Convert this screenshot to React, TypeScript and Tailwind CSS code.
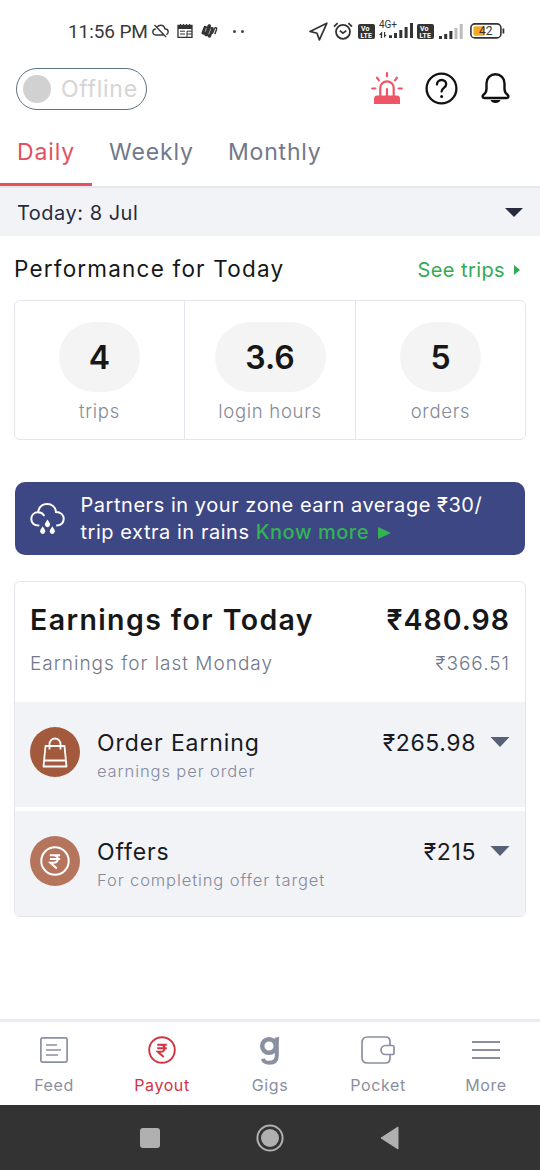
import type { ReactNode } from "react";

type Stat = { value: string; label: string; pill: string };

const stats: Stat[] = [
  { value: "4", label: "trips", pill: "w-[81px]" },
  { value: "3.6", label: "login hours", pill: "w-[111px]" },
  { value: "5", label: "orders", pill: "w-[81px]" },
];

function VolteBadge() {
  return (
    <svg width="17" height="15" viewBox="0 0 17 15">
      <rect width="17" height="15" rx="2" fill="#333" />
      <text x="3" y="6.8" fontSize="7" fontWeight="700" fill="#fff" fontFamily="Roboto, sans-serif">Vo</text>
      <text x="2.6" y="13.5" fontSize="7" fontWeight="700" fill="#fff" fontFamily="Roboto, sans-serif">LTE</text>
    </svg>
  );
}

function StatusBar() {
  return (
    <div className="flex h-[62px] shrink-0 items-center pl-[68px] text-[#3a3a3a]">
      <span className="w-[84px] whitespace-nowrap font-[Roboto,sans-serif] text-[19px] leading-none tracking-[-0.1px]">
        11:56 PM
      </span>
      <svg width="17" height="14" viewBox="0 0 17 14" fill="none" stroke="currentColor" strokeWidth="1.4">
        <path d="M5 3.2C6 1.8 7.3 1.2 8.7 1.2c2.2 0 3.8 1.4 4.2 3.6 2 .2 3.3 1.3 3.3 3 0 1.5-.8 2.5-2 2.9M11.5 11H4.3C2.2 11 .8 9.8.8 8c0-1.8 1.3-2.9 3-3M2.5 1l11.5 12" />
      </svg>
      <svg className="ml-[8px]" width="16" height="14" viewBox="0 0 16 14">
        <path d="M1 1.5h14v11.8H1z" fill="none" stroke="#333" strokeWidth="1.3" />
        <path d="M1 1h14v4H1zM3 0h1v1H3zM6 0h1v1H6zM9 0h1v1H9zM12 0h1v1h-1z" fill="#333" />
        <path d="M3 7.2h5M3 10h5M10 13V7.2h5M10 10h5" stroke="#333" strokeWidth="1" fill="none" />
      </svg>
      <svg className="ml-[8px]" width="17" height="14" viewBox="0 0 17 14" fill="none" stroke="#333" strokeLinecap="round">
        <path d="M2.3 8.8l2-5.2M5.2 10.5l3-8.5M8.4 11.8l2.5-7" strokeWidth="3.6" />
        <path d="M11.6 9.3l1.8-4.6c1-2 2.7-1.2 2.2.5L14 9.7" strokeWidth="1.4" />
        <path d="M5.2 4.3l-.8 3M9.8 5l-2 5" stroke="#fff" strokeWidth=".6" />
      </svg>
      <span className="ml-[15px] flex gap-[5px]">
        <i className="size-[3px] rounded-full bg-[#444]" />
        <i className="size-[3px] rounded-full bg-[#444]" />
      </span>
      <svg className="ml-[65px]" width="19" height="19" viewBox="0 0 19 19" fill="none" stroke="#333" strokeWidth="1.7" strokeLinejoin="round">
        <path d="M17.8 1.3L1 9.4l7 1.9 2.4 6.6z" />
      </svg>
      <svg className="ml-[5px]" width="20" height="18" viewBox="0 0 20 18" fill="none" stroke="#333" strokeWidth="1.8">
        <circle cx="10" cy="9.8" r="7" />
        <path d="M1 4.6l3.6-3.4M19 4.6l-3.6-3.4M6.8 8.6l3.2 2.6 3.3-2.6" />
      </svg>
      <span className="ml-[5px]"><VolteBadge /></span>
      <svg className="ml-[4px] mt-[-2px]" width="35" height="20" viewBox="0 0 35 20" fill="#333">
        <text x="0" y="8" fontSize="10" fontFamily="Roboto, sans-serif" textLength="18">4G+</text>
        <path d="M2.5 12L0 15h1.8v3h1.4v-6zM5 12v6l2.6-3H6.2v-3z" />
        <path d="M10 15.3h3V18h-3zM15 13h3v5h-3zM20.3 10h3v8h-3zM25.6 7h3v11h-3zM31 3h3v15h-3z" />
      </svg>
      <span className="ml-[3px]"><VolteBadge /></span>
      <svg className="ml-[5px]" width="24" height="15" viewBox="0 0 24 15" fill="#333">
        <path d="M0 12h3v3H0zM5.2 10h3v5h-3zM10.4 7h3v8h-3z" />
        <path d="M15.5 4h3v11h-3zM20.7 0h3v15h-3z" fill="#bbb" />
      </svg>
      <svg className="ml-[7px]" width="35" height="16" viewBox="0 0 35 16">
        <rect x=".9" y=".9" width="30" height="14" rx="4" fill="none" stroke="#333" strokeWidth="1.6" />
        <rect x="3.5" y="3.3" width="11" height="9.4" rx="1.5" fill="#f5a623" />
        <rect x="32.5" y="5.5" width="1.8" height="5" fill="#333" />
        <text x="9" y="12.2" fontSize="12" fill="#333" fontFamily="Roboto, sans-serif">42</text>
      </svg>
    </div>
  );
}

function Header() {
  return (
    <header className="flex h-[58px] shrink-0 items-start pl-4 pt-[6px]">
      <div className="flex h-[42px] w-[131px] items-center rounded-full border border-[#5d7384] pl-[6px]">
        <span className="size-7 rounded-full bg-[#d1d1d1]" />
        <span className="ml-[10px] text-[23px] leading-none tracking-[0.7px] text-[#d5d5d5]">Offline</span>
      </div>
      <svg className="ml-[224px] mt-1" width="32" height="33" viewBox="0 0 32 33" fill="none" stroke="#ee5565" strokeWidth="2.2" strokeLinecap="round">
        <path d="M16 1.2v3M6 5.6l2 2.7M26 5.6l-2 2.7M1.2 16.5h3.2M27.6 16.5h3.2" />
        <path d="M9.3 24v-8a6.7 6.7 0 0 1 13.4 0v8M16 24v-7" />
        <path d="M3 32v-5c0-2 1-3.500 3-3.500h20c2 0 3 1.500 3 3.500v5z" fill="#ee5565" stroke="none" />
      </svg>
      <svg className="ml-[22px] mt-1" width="33" height="33" viewBox="0 0 33 33" fill="none" stroke="#111" strokeWidth="2.3" strokeLinecap="round">
        <circle cx="16.5" cy="16.5" r="14.9" />
        <path d="M12 12.5c0-2.600 1.900-4.500 4.600-4.500 2.700 0 4.600 1.800 4.600 4.200 0 3.700-4.600 3.700-4.600 7.300" />
        <circle cx="16.6" cy="24.5" r="1.5" fill="#111" stroke="none" />
      </svg>
      <svg className="ml-[23px] mt-[5px]" width="29" height="31" viewBox="0 0 29 31" fill="none" stroke="#111" strokeWidth="2.4" strokeLinejoin="round">
        <path d="M14.5 1.300c-5.200 0-9 3.900-9 9v5.500c0 3.200-1.300 4.700-3 6-1.500 1.200-1 3.200 1 3.200h22c2 0 2.500-2 1-3.200-1.700-1.300-3-2.800-3-6v-5.500c0-5.100-3.800-9-9-9z" />
        <path d="M9.5 27h10c-.6 2-2.600 3-5 3s-4.400-1-5-3z" fill="#111" stroke="none" />
      </svg>
    </header>
  );
}

function Tabs() {
  return (
    <nav className="flex h-[68px] shrink-0 border-b-2 border-[#e5e7ec] text-[23px] leading-none text-[#72788c]">
      <div className="relative w-[92px] pl-[17px] pt-[21px] tracking-[0.9px] text-[#e4505f]">
        Daily
        <span className="absolute left-0 top-[63px] h-[3px] w-[92px] bg-[#e4505f]" />
      </div>
      <span className="ml-[17px] w-[119px] pt-[21px] tracking-[0.9px]">Weekly</span>
      <span className="pt-[21px] tracking-[0.8px]">Monthly</span>
    </nav>
  );
}

function Rupee({ className }: { className: string }) {
  return (
    <svg className={className} viewBox="0 0 28 28" fill="none" stroke="currentColor">
      <circle cx="14" cy="14" r="12.8" strokeWidth="1.9" />
      <path d="M9.2 8.7h9.6M9.2 12.2h9.6M9.2 8.7h3.2c5.6 0 5.6 7 0 7H9.7l6 5.3" strokeWidth="1.9" />
    </svg>
  );
}

function EarningRow({ icon, title, note, amount }: { icon: ReactNode; title: string; note: string; amount: string }) {
  return (
    <div className="flex h-[105px] items-start bg-[#f2f3f7] px-[15px]">
      {icon}
      <div className="ml-[17px] flex-1 pt-[28px]">
        <div className="text-[23px] leading-[26px] tracking-[0.9px] text-[#171a22]">{title}</div>
        <div className="mt-[4px] text-[16.5px] font-light leading-[22px] tracking-[0.9px] text-[#858a9d]">{note}</div>
      </div>
      <div className="mt-[28px] text-[23px] leading-[26px] tracking-[0.6px] text-[#171a22]">{amount}</div>
      <svg className="ml-[14px] mt-[35px]" width="20" height="10" viewBox="0 0 20 10">
        <path d="M.5 0h19L10 10z" fill="#566176" />
      </svg>
    </div>
  );
}

function NavItem({ label, active, children }: { label: string; active?: boolean; children: ReactNode }) {
  return (
    <div className={active ? "flex w-[108px] flex-col items-center text-[#d4323f]" : "flex w-[108px] flex-col items-center text-[#8a8fa1]"}>
      <div className="flex h-[56px] items-center">{children}</div>
      <span className="-mt-px text-[16px] leading-[16px] tracking-[0.6px]">{label}</span>
    </div>
  );
}

export default function App() {
  return (
    <main className="flex h-[1170px] w-[540px] flex-col overflow-hidden bg-white font-[Inter,sans-serif] text-[#171717]">
      <StatusBar />
      <Header />
      <Tabs />
      <div className="flex h-12 shrink-0 items-center justify-between bg-[#f2f3f7] px-[17px] text-[#272b3d]">
        <span className="mt-px text-[20px] leading-none tracking-[0.5px]">Today: 8 Jul</span>
        <svg width="18" height="9" viewBox="0 0 18 9">
          <path d="M0 0h18L9 9z" fill="#272b3d" />
        </svg>
      </div>

      <section className="px-[14px]">
        <div className="flex h-[64px] items-center justify-between pr-[6px]">
          <h2 className="mt-[2px] text-[22.5px] tracking-[1.2px]">Performance for Today</h2>
          <div className="mt-[3px] flex items-center text-[#35aa52]">
            <span className="text-[20px] tracking-[0.4px]">See trips</span>
            <svg className="ml-[9px]" width="6" height="10" viewBox="0 0 6 10">
              <path d="M0 0l6 5-6 5z" fill="currentColor" />
            </svg>
          </div>
        </div>
        <div className="grid h-[140px] grid-cols-[170px_171px_1fr] divide-x divide-[#e4e5ed] rounded-md border border-[#e4e5ed]">
          {stats.map((s) => (
            <div key={s.label} className="flex flex-col items-center pt-[21px]">
              <span className={`flex h-[70px] items-center justify-center rounded-[35px] bg-[#f4f4f4] pt-[2px] text-[32px] font-semibold ${s.pill}`}>
                {s.value}
              </span>
              <span className="mt-[7px] text-[18.5px] font-light leading-6 tracking-[0.7px] text-[#858a98]">{s.label}</span>
            </div>
          ))}
        </div>
      </section>

      <div className="mx-[15px] mt-[42px] flex h-[73px] shrink-0 rounded-[10px] bg-[#3d4784] pl-[15px] text-white">
        <svg className="mt-[20px]" width="36" height="33" viewBox="0 0 36 33" fill="none" stroke="#fff" strokeWidth="2" strokeLinecap="round">
          <path d="M8.5 23.5C4 23.5 1.3 20.8 1.3 17c0-4 2.9-6.7 6.7-6.7C9 5 12.5 2 17 2c5 0 8.4 3.2 9 8 4.5.2 7.7 2.7 7.7 6.7 0 3.7-2.5 6.3-6.7 6.8M8 10.3c2.6 0 4.6 1 5.8 3" />
          <path d="M17.5 17.5l-2.2 3.6a2.600 2.600 0 1 0 4.400 0zM12.700 24.200l-2.200 3.600a2.600 2.600 0 1 0 4.400 0zM22.300 24.200l-2.200 3.600a2.600 2.600 0 1 0 4.400 0z" fill="#fff" stroke="none" />
        </svg>
        <p className="ml-[14.5px] whitespace-nowrap pt-[10px] text-[20px] leading-[27px] tracking-[0.54px]">
          Partners in your zone earn average ₹30/
          <br />
          trip extra in rains <span className="font-medium text-[#35b254]">Know more</span>
          <svg className="ml-[9px] inline-block align-[0px]" width="13" height="12" viewBox="0 0 13 12">
            <path d="M0 0l13 6-13 6z" fill="#35b254" />
          </svg>
        </p>
      </div>

      <section className="mx-[14px] mt-[26px] shrink-0 rounded-md border border-[#e4e5ec]">
        <div className="h-[120px] px-[15px] pt-[21px]">
          <div className="flex justify-between text-[28.5px] font-semibold leading-[34px]">
            <h2 className="tracking-[1.4px]">Earnings for Today</h2>
            <span className="tracking-[1px]">₹480.98</span>
          </div>
          <div className="mt-[14px] flex justify-between text-[19px] font-light leading-[26px] text-[#72788c]">
            <span className="tracking-[1px]">Earnings for last Monday</span>
            <span className="tracking-[1px]">₹366.51</span>
          </div>
        </div>
        <EarningRow
          title="Order Earning"
          note="earnings per order"
          amount="₹265.98"
          icon={
            <div className="mt-[25px] flex size-[50px] items-center justify-center rounded-full bg-[#a3593b] text-white">
              <svg width="26" height="31" viewBox="0 0 26 31" fill="none" stroke="currentColor" strokeWidth="1.8" strokeLinejoin="round">
                <path d="M3.5 9h19l2 20.5h-23zM1.7 23.5h22.6M7.5 12.5V7a5.5 5.5 0 0 1 11 0v5.5" />
              </svg>
            </div>
          }
        />
        <div className="h-1 bg-white" />
        <EarningRow
          title="Offers"
          note="For completing offer target"
          amount="₹215"
          icon={
            <div className="mt-[25px] flex size-[50px] items-center justify-center rounded-full bg-[#b5755d] text-white">
              <Rupee className="size-[30px]" />
            </div>
          }
        />
      </section>

      <footer className="mt-auto shrink-0">
        <div className="flex h-[86px] border-t-[3px] border-[#ebebf2]">
          <NavItem label="Feed">
            <svg width="28" height="26" viewBox="0 0 28 26" fill="none" stroke="currentColor" strokeWidth="1.7">
              <rect x=".9" y=".9" width="26.2" height="24.2" rx="1.5" />
              <path d="M6 8h11M6 13h15M6 18h12" />
            </svg>
          </NavItem>
          <NavItem label="Payout" active>
            <Rupee className="size-7" />
          </NavItem>
          <NavItem label="Gigs">
            <svg width="22" height="29" viewBox="0 0 22 29" fill="none" stroke="currentColor">
              <circle cx="10" cy="10" r="6.8" strokeWidth="4.5" />
              <path d="M17.8 1.5v18.3c0 5-2.7 7-7.8 7-3.4 0-5.3-1-6.2-4" strokeWidth="4" />
              <path d="M15 4l5-3.5v5z" fill="currentColor" stroke="none" />
            </svg>
          </NavItem>
          <NavItem label="Pocket">
            <svg width="34" height="28" viewBox="0 0 34 28" fill="none" stroke="currentColor" strokeWidth="1.7">
              <path d="M29 9V5.5C29 2.5 27.5 1 24.5 1h-18C3 1 1 3 1 6.5v15C1 25 3 27 6.5 27h18c3 0 4.5-1.5 4.5-4.5V18.5" />
              <path d="M24.5 9.5h6.7c1 0 1.8.8 1.8 1.8v5.4c0 1-.8 1.8-1.8 1.8h-6.7a4.5 4.5 0 0 1 0-9z" />
            </svg>
          </NavItem>
          <NavItem label="More">
            <svg width="28" height="20" viewBox="0 0 28 20" fill="none" stroke="currentColor" strokeWidth="1.9">
              <path d="M0 2h28M0 10h28M0 18h28" />
            </svg>
          </NavItem>
        </div>
        <div className="flex h-[65px] items-center bg-[#333] pl-[140px]">
          <span className="size-5 rounded-[3px] bg-[#b0b0b0]" />
          <svg className="ml-24" width="28" height="28" viewBox="0 0 28 28">
            <circle cx="14" cy="14" r="12.6" fill="none" stroke="#b0b0b0" strokeWidth="2" />
            <circle cx="14" cy="14" r="9" fill="#b0b0b0" />
          </svg>
          <svg className="ml-24" width="19" height="24" viewBox="0 0 19 24">
            <path d="M18 1v22L1 12z" fill="#b0b0b0" stroke="#b0b0b0" strokeLinejoin="round" />
          </svg>
        </div>
      </footer>
    </main>
  );
}
